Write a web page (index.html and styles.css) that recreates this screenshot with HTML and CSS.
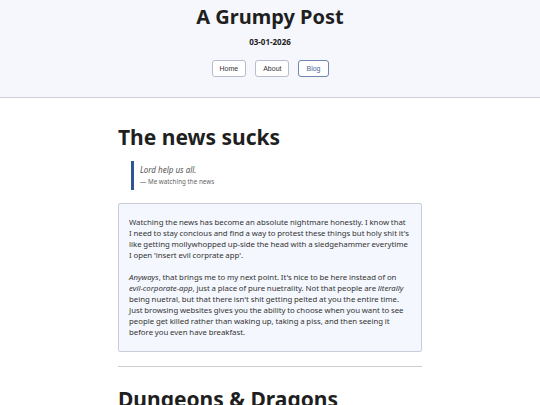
FILE: index.html
```html
<!DOCTYPE html>
<html lang="en">
<head>
<meta charset="utf-8">
<title>A Grumpy Post</title>
<link rel="stylesheet" href="styles.css">
</head>
<body>
<header class="site-header">
  <h1 class="site-title">A Grumpy Post</h1>
  <p class="site-date">03-01-2026</p>
  <nav class="site-nav">
    <button class="nav-btn">Home</button>
    <button class="nav-btn">About</button>
    <button class="nav-btn nav-btn-active">Blog</button>
  </nav>
</header>
<main class="content">
  <article class="post">
    <h2 class="post-title">The news sucks</h2>
    <blockquote class="quote">
      <p class="quote-text">Lord help us all.</p>
      <p class="quote-cite">— Me watching the news</p>
    </blockquote>
    <div class="card">
      <p>Watching the news has become an absolute nightmare honestly. I know that I need to stay concious and find a way to protest these things but holy shit it's like getting mollywhopped up-side the head with a sledgehammer everytime I open 'insert evil corprate app'.</p>
      <p><em>Anyways</em>, that brings me to my next point. It's nice to be here instead of on <em>evil-corporate-app</em>, just a place of pure nuetrality. Not that people are <em>literally</em> being nuetral, but that there isn't shit getting pelted at you the entire time. Just browsing websites gives you the ability to choose when you want to see people get killed rather than waking up, taking a piss, and then seeing it before you even have breakfast.</p>
    </div>
  </article>
  <hr class="divider">
  <article class="post">
    <h2 class="post-title post-title-next">Dungeons &amp; Dragons</h2>
  </article>
</main>
</body>
</html>
```

FILE: styles.css
```css
html, body {
  margin: 0;
  padding: 0;
}
body {
  background: #ffffff;
  color: #222222;
  font-family: "Noto Sans", "Open Sans", sans-serif;
}
.site-header {
  background: #f5f7fd;
  border-bottom: 1px solid #cfcfd6;
  text-align: center;
  padding: 3px 0 20px;
}
.site-title {
  margin: 0;
  font-size: 20px;
  line-height: 28px;
  font-weight: 700;
  color: #1f1f1f;
}
.site-date {
  margin: 5px 0 0;
  font-size: 8px;
  font-weight: 700;
  line-height: 12px;
  color: #222;
}
.site-nav {
  display: flex;
  justify-content: center;
  gap: 9px;
  margin-top: 12px;
}
.nav-btn {
  font-family: "Liberation Sans", Arial, sans-serif;
  font-size: 7px;
  height: 17px;
  padding: 0 7px;
  background: #ffffff;
  border: 1px solid #b7bccb;
  border-radius: 3px;
  color: #333;
}
.nav-btn-active {
  border-color: #6f86ad;
  color: #4a66a0;
}
.content {
  width: 304px;
  margin: 0 auto;
  padding-top: 26px;
}
.post-title {
  margin: 0;
  font-size: 21px;
  line-height: 26px;
  font-weight: 700;
  color: #1f1f1f;
}
.post-title-next {
  margin-top: 19px;
}
.quote {
  margin: 11px 0 0 13px;
  padding: 3px 0 3px 6px;
  border-left: 3px solid #2f5595;
}
.quote-text {
  margin: 0;
  font-size: 8px;
  line-height: 12px;
  font-style: italic;
  color: #555;
}
.quote-cite {
  margin: 0;
  font-size: 6.3px;
  line-height: 11px;
  color: #666;
}
.card {
  margin-top: 13px;
  background: #f4f7fd;
  border: 1px solid #c9cdd9;
  border-radius: 2px;
  padding: 13px 11.6px 13px 10px;
  font-size: 7.8px;
  line-height: 11px;
  word-spacing: -0.25px;
  color: #333;
}
.card p {
  margin: 0 0 11px;
}
.card p:last-child {
  margin-bottom: 0;
}
.divider {
  margin: 14px 0 0;
  border: 0;
  border-top: 1px solid #cccccc;
}
```
